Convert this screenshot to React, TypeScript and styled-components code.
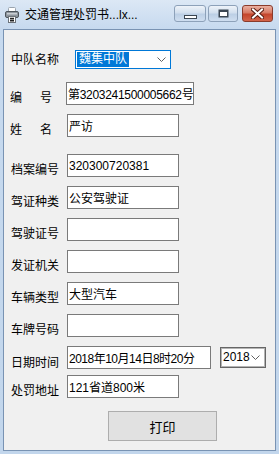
import React from 'react';
import styled, { createGlobalStyle } from 'styled-components';

const Global = createGlobalStyle`
  html, body { margin: 0; padding: 0; background: #c6d9ee; }
  body {
    width: 279px; height: 454px; overflow: hidden;
    font-family: "Liberation Sans", "Noto Sans CJK SC", sans-serif;
    font-size: 12px; color: #000;
  }
`;

const Window = styled.div`
  width: 279px; height: 454px; box-sizing: border-box;
  display: flex; flex-direction: column;
  background: linear-gradient(#dce8f5, #c7daef 28px, #c2d6ec);
  padding: 0 3px 3px 3px;
`;

const TitleBar = styled.div`
  height: 29px; flex-shrink: 0;
  display: flex; align-items: center;
  padding-left: 2px;
`;

const TitleText = styled.span`
  margin-left: 6px; font-size: 12px; line-height: 16px; color: #000;
`;

const Controls = styled.div`
  display: flex; align-self: flex-start;
  margin-top: 5px; margin-left: auto; margin-right: 3px;
`;

const CapButton = styled.div<{ $w: number; $close?: boolean; $gap: number }>`
  width: ${p => p.$w}px; height: 17px; box-sizing: border-box;
  margin-left: ${p => p.$gap}px;
  border: 1px solid ${p => (p.$close ? '#8a3b2c' : '#8da1b9')};
  border-radius: 3px;
  background: ${p =>
    p.$close
      ? 'linear-gradient(#eab0a2, #d77a64 45%, #c4452c 55%, #d3644a)'
      : 'linear-gradient(#eef3f9, #d2dfee 45%, #bccfe5 55%, #cfdef0)'};
  display: flex; align-items: center; justify-content: center;
`;

const Body = styled.div`
  flex: 1; background: #f0f0f0;
  border: 1px solid #7993b3;
  display: flex; flex-direction: column;
  padding: 20px 0 0 7px;
`;

const Row = styled.div<{ $mt: number; $h?: number }>`
  display: flex; align-items: center;
  margin-top: ${p => p.$mt}px;
  height: ${p => p.$h ?? 23}px;
`;

const LabelBox = styled.div<{ $shift?: number }>`
  width: 56px; flex-shrink: 0;
  padding-top: ${p => p.$shift ?? 8}px;
  box-sizing: border-box;
`;

const LabelText = styled.div<{ $w: number; $ml?: number }>`
  display: flex; justify-content: space-between;
  width: ${p => p.$w}px; margin-left: ${p => p.$ml ?? 0}px;
  font-size: 12px; line-height: 16px; white-space: nowrap;
`;

const Field = styled.input<{ $w: number; $ml?: number; $ls?: number }>`
  width: ${p => p.$w}px; height: 23px; box-sizing: border-box;
  margin: 0 0 0 ${p => p.$ml ?? 0}px; padding: 0 0 0 1px;
  border: 1px solid #7a7a7a; background: #fff;
  font: 12px "Liberation Sans", "Noto Sans CJK SC", sans-serif;
  letter-spacing: ${p => p.$ls ?? 0}px;
  color: #000; outline: none;
`;

const Combo = styled.div<{ $w: number; $h: number; $ml: number; $focus?: boolean }>`
  width: ${p => p.$w}px; height: ${p => p.$h}px; box-sizing: border-box;
  margin-left: ${p => p.$ml}px;
  background: #fff;
  border: 1px solid ${p => (p.$focus ? '#0078d7' : '#666')};
  box-shadow: ${p => (p.$focus ? 'none' : 'inset 0 0 0 1px #b4b4b4')};
  display: flex; align-items: center;
  padding: 0 ${p => (p.$focus ? 4 : 5)}px 0 ${p => (p.$focus ? 1 : 2)}px;
  font-size: 12px; white-space: nowrap;
`;

const Selected = styled.span`
  background: #0078d7; color: #fff;
  padding: 0 2px; line-height: 15px;
`;

const ComboText = styled.span`
  line-height: 15px;
`;

const Chevron = styled.svg`
  margin-left: auto; flex-shrink: 0;
`;

const PrintButton = styled.button`
  margin-left: 97px; width: 109px; height: 30px;
  box-sizing: border-box; padding: 0;
  background: #e1e1e1; border: 1px solid #adadad;
  font: 13px "Liberation Sans", "Noto Sans CJK SC", sans-serif;
  color: #000;
`;

const AppIcon = () => (
  <svg width="14" height="16" viewBox="0 0 14 16">
    <rect x="3.5" y="0.5" width="7" height="5" rx="1" fill="#fff" stroke="#9aa4ae" />
    <rect x="0.5" y="4.5" width="13" height="6" rx="1.5" fill="#8e969e" stroke="#4d545b" />
    <rect x="2" y="6" width="10" height="1.5" fill="#c9ced3" />
    <rect x="3.5" y="9.5" width="7" height="6" fill="#fff" stroke="#6c737a" />
    <path d="M5 11.5h4M5 13.5h4M6 10.5v4.5M8 10.5v4.5" stroke="#222" strokeWidth="1" />
  </svg>
);

const Down = () => (
  <Chevron width="9" height="5" viewBox="0 0 9 5">
    <path d="M0.5 0.5L4.5 4.5L8.5 0.5" fill="none" stroke="#606060" strokeWidth="1" />
  </Chevron>
);

type RowDef = {
  label: string[];
  lw: number;
  lml?: number;
  value: string;
  w: number;
  fml?: number;
  ls?: number;
  mt: number;
};

const rows: RowDef[] = [
  { label: ['编', '号'], lw: 42, lml: -1, value: '第3203241500005662号', w: 128, fml: -1, ls: -0.3, mt: 13 },
  { label: ['姓', '名'], lw: 42, lml: -1, value: '严访', w: 112, mt: 9 },
  { label: ['档', '案', '编', '号'], lw: 48, value: '320300720381', w: 112, mt: 17 },
  { label: ['驾', '证', '种', '类'], lw: 48, value: '公安驾驶证', w: 112, mt: 9 },
  { label: ['驾', '驶', '证', '号'], lw: 48, value: '', w: 112, mt: 9 },
  { label: ['发', '证', '机', '关'], lw: 48, value: '', w: 112, mt: 9 },
  { label: ['车', '辆', '类', '型'], lw: 48, value: '大型汽车', w: 112, mt: 9 },
  { label: ['车', '牌', '号', '码'], lw: 48, value: '', w: 112, mt: 9 },
];

export default function App() {
  return (
    <>
      <Global />
      <Window>
        <TitleBar>
          <AppIcon />
          <TitleText>交通管理处罚书...lx...</TitleText>
          <Controls>
            <CapButton $w={32} $gap={0}>
              <svg width="13" height="4" viewBox="0 0 13 4" style={{ marginTop: 6 }}>
                <rect x="0.5" y="0.5" width="12" height="3" fill="#fff" stroke="#3b4652" />
              </svg>
            </CapButton>
            <CapButton $w={30} $gap={2}>
              <svg width="11" height="9" viewBox="0 0 11 9">
                <rect x="0.5" y="0.5" width="10" height="8" fill="#3b4652" />
                <rect x="2" y="3" width="7" height="4" fill="#fff" />
              </svg>
            </CapButton>
            <CapButton $w={31} $gap={4} $close>
              <svg width="13" height="11" viewBox="0 0 13 11">
                <path d="M2 1.5L11 9.5M11 1.5L2 9.5" stroke="#5a1e14" strokeWidth="4" strokeLinecap="square" />
                <path d="M2 1.5L11 9.5M11 1.5L2 9.5" stroke="#fff" strokeWidth="2" strokeLinecap="square" />
              </svg>
            </CapButton>
          </Controls>
        </TitleBar>
        <Body>
          <Row $mt={0} $h={19}>
            <LabelBox $shift={0}>
              <LabelText $w={48}>
                <span>中</span><span>队</span><span>名</span><span>称</span>
              </LabelText>
            </LabelBox>
            <Combo $w={96} $h={19} $ml={8} $focus>
              <Selected>魏集中队</Selected>
              <Down />
            </Combo>
          </Row>
          {rows.map((r, i) => (
            <Row key={i} $mt={r.mt}>
              <LabelBox>
                <LabelText $w={r.lw} $ml={r.lml}>
                  {r.label.map((c, j) => (
                    <span key={j}>{c}</span>
                  ))}
                </LabelText>
              </LabelBox>
              <Field $w={r.w} $ml={r.fml} $ls={r.ls} readOnly value={r.value} />
            </Row>
          ))}
          <Row $mt={9}>
            <LabelBox $shift={11}>
              <LabelText $w={48}>
                <span>日</span><span>期</span><span>时</span><span>间</span>
              </LabelText>
            </LabelBox>
            <Field $w={144} $ls={-0.5} readOnly value="2018年10月14日8时20分" />
            <Combo $w={46} $h={21} $ml={9}>
              <ComboText>2018</ComboText>
              <Down />
            </Combo>
          </Row>
          <Row $mt={6}>
            <LabelBox>
              <LabelText $w={48}>
                <span>处</span><span>罚</span><span>地</span><span>址</span>
              </LabelText>
            </LabelBox>
            <Field $w={112} readOnly value="121省道800米" />
          </Row>
          <Row $mt={13} $h={30}>
            <PrintButton>打印</PrintButton>
          </Row>
        </Body>
      </Window>
    </>
  );
}
